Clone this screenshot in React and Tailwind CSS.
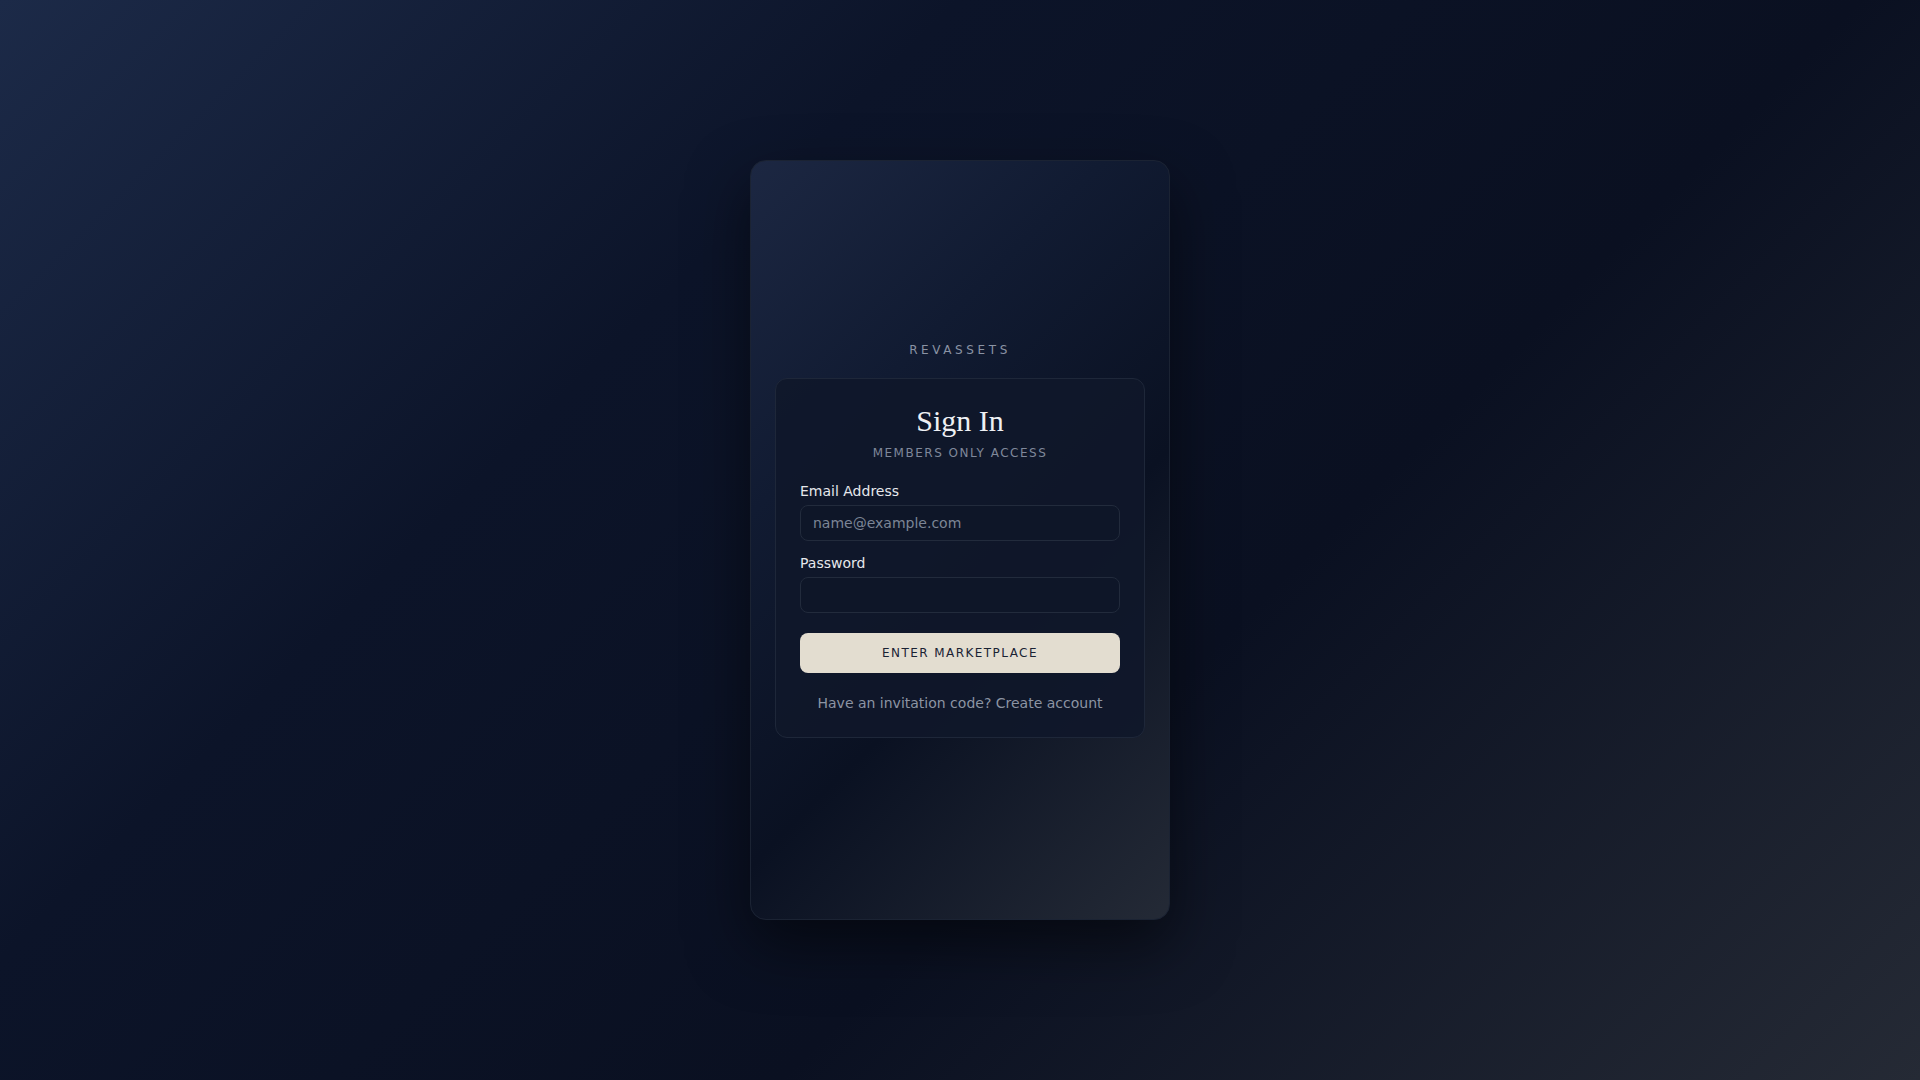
export default function App() {
  return (
    <div
      className="min-h-screen w-full flex items-center justify-center bg-[linear-gradient(135deg,#1c2a48_0%,#0c1429_32%,#0a1021_62%,#252a35_100%)]"
      style={{ fontFamily: '"DejaVu Sans", "Noto Sans", sans-serif' }}
    >
      <div className="w-[420px] h-[760px] rounded-2xl border border-[#1b2333] bg-[linear-gradient(135deg,#1c2742_0%,#111b32_30%,#0a1122_60%,#242a36_100%)] shadow-[0_25px_60px_rgba(0,0,0,0.5)] flex flex-col items-center justify-center px-6">
        <div className="text-xs leading-4 tracking-[0.3em] text-[#8a93a4] mb-5">REVASSETS</div>
        <div className="w-full rounded-xl border border-[#1e2739] bg-[#0f172a]/90 px-6 pt-[26px] pb-6">
          <div className="flex flex-col items-center">
            <h1
              className="text-[30px] leading-8 text-[#eef0f4] font-normal"
              style={{ fontFamily: '"Liberation Serif", "Times New Roman", serif' }}
            >
              Sign In
            </h1>
            <div className="mt-2 text-xs leading-4 tracking-[0.125em] text-[#7f889a]">MEMBERS ONLY ACCESS</div>
          </div>
          <div className="mt-5 flex flex-col gap-3">
            <div className="flex flex-col gap-1">
              <label className="text-sm leading-5 text-[#e6e8ec]">Email Address</label>
              <input
                type="email"
                placeholder="name@example.com"
                className="h-9 w-full rounded-lg border border-[#222b3c] bg-[#0e1628] px-3 text-sm text-[#e6e8ec] placeholder:text-[#7c8596] outline-none"
              />
            </div>
            <div className="flex flex-col gap-1">
              <label className="text-sm leading-5 text-[#e6e8ec]">Password</label>
              <input
                type="password"
                className="h-9 w-full rounded-lg border border-[#222b3c] bg-[#0e1628] px-3 text-sm text-[#e6e8ec] outline-none"
              />
            </div>
          </div>
          <button className="mt-5 h-10 w-full rounded-lg bg-[#e3ddd0] text-xs font-medium tracking-[0.12em] text-[#1a2233]">
            ENTER MARKETPLACE
          </button>
          <div className="mt-5 text-center text-sm leading-5 text-[#8c94a3]">
            Have an invitation code? Create account
          </div>
        </div>
      </div>
    </div>
  );
}
